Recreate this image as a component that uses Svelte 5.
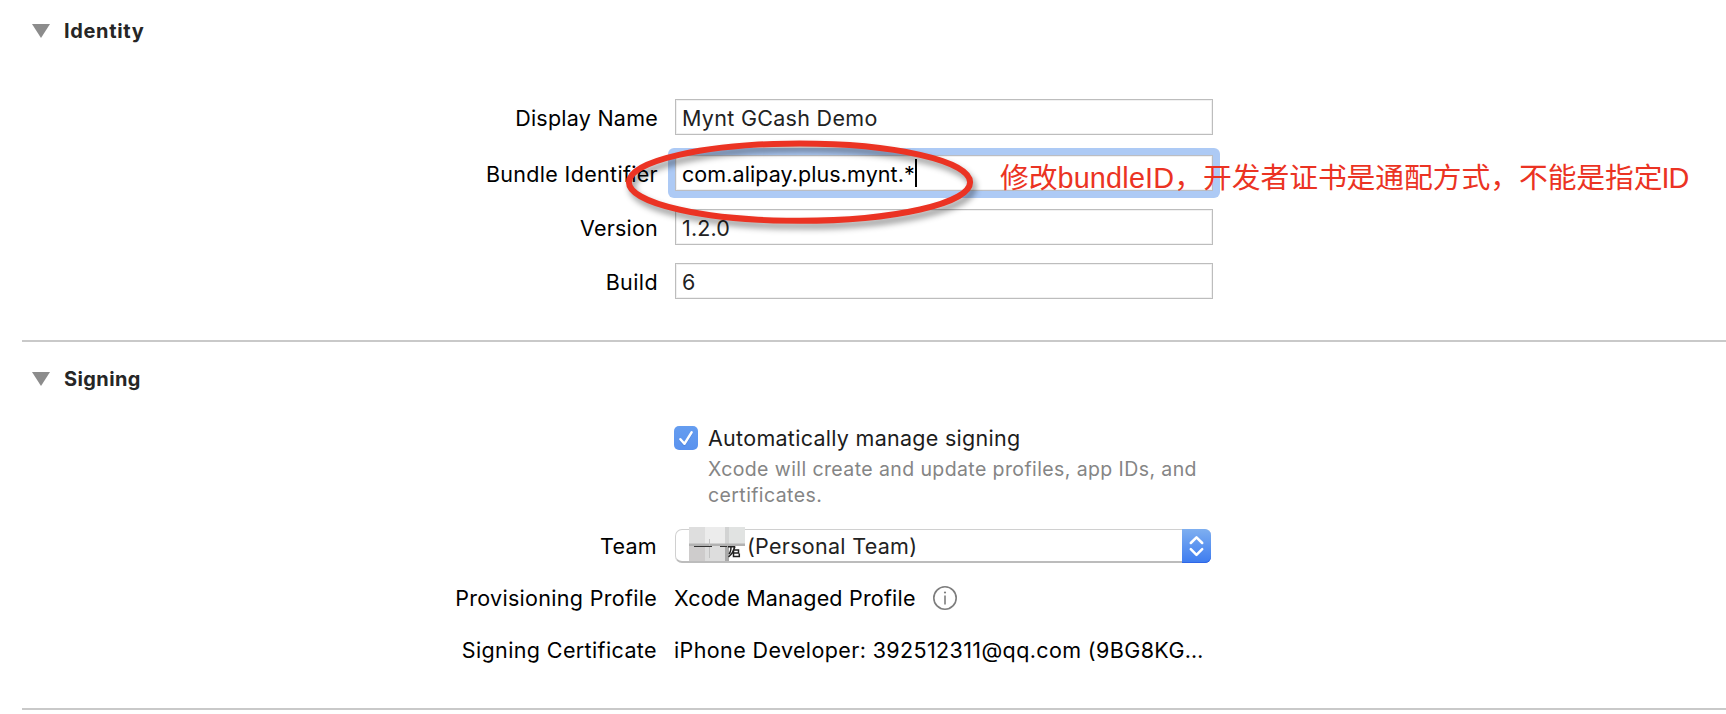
<script>
  const fields = [
    { label: 'Display Name', value: 'Mynt GCash Demo', ls: 0.24, vs: 0.3 },
    { label: 'Bundle Identifier', value: 'com.alipay.plus.mynt.*', ls: 0.32, vs: 0.08, focused: true },
    { label: 'Version', value: '1.2.0', ls: 0.2, vs: 0.15 },
    { label: 'Build', value: '6', ls: 0.4, vs: 0 }
  ];
</script>

<main lang="zh-CN">
  <section class="identity">
    <header>
      <svg width="18" height="14" viewBox="0 0 18 14"><path d="M0 0H18L9 14Z" fill="#8c8c8c" /></svg>
      <h2 class="wide">Identity</h2>
    </header>
    <div class="fields">
      {#each fields as f}
        <div class="row" class:bundle={f.focused}>
          <span class="label" style="letter-spacing:{f.ls}px">{f.label}</span>
          <div class="field" class:focused={f.focused}>
            <span style="letter-spacing:{f.vs}px">{f.value}</span>{#if f.focused}<i class="caret"></i>{/if}
          </div>
        </div>
      {/each}
    </div>
  </section>

  <section class="signing">
    <header>
      <svg width="18" height="14" viewBox="0 0 18 14"><path d="M0 0H18L9 14Z" fill="#8c8c8c" /></svg>
      <h2>Signing</h2>
    </header>
    <div class="auto">
      <svg class="check" width="24" height="24" viewBox="0 0 24 24">
        <defs><linearGradient id="cb" x2="0" y2="1"><stop stop-color="#659df0" /><stop offset="1" stop-color="#5a92ee" /></linearGradient></defs>
        <rect width="24" height="24" rx="5" fill="url(#cb)" />
        <path d="M6.4 13.2L10.4 17.8L17.6 6.4" fill="none" stroke="#3f74cc" stroke-opacity=".45" stroke-width="2.6" stroke-linecap="round" stroke-linejoin="round" transform="translate(0 1)" />
        <path d="M6.4 13.2L10.4 17.8L17.6 6.4" fill="none" stroke="#fff" stroke-width="2.5" stroke-linecap="round" stroke-linejoin="round" />
      </svg>
      <div>
        <div class="title">Automatically manage signing</div>
        <p>Xcode will create and update profiles, app IDs, and<br />certificates.</p>
      </div>
    </div>
    <div class="row team">
      <span class="label">Team</span>
      <div class="select">
        <svg class="mosaic" width="57" height="34" viewBox="0 0 57 34">
          <rect width="56" height="17" fill="#e6e6e6" />
          <rect width="16" height="17" fill="#dedede" />
          <rect x="16" width="20" height="17" fill="#ececec" />
          <rect x="36" width="4" height="17" fill="#d2d3d3" />
          <rect x="40" width="16" height="17" fill="#e1e3e2" />
          <rect y="17" width="16" height="17" fill="#cecccc" />
          <rect x="16" y="17" width="20" height="17" fill="#dddddd" />
          <rect x="36" y="17" width="4" height="17" fill="#a9a9a9" />
          <rect y="16.5" width="56" height="2.5" fill="#b2b2b2" />
          <path d="M20.5 12V31" stroke="#c2c2c2" />
          <path d="M5 19.5H23M31 19.5H38" stroke="#333" stroke-width="1.2" />
          <path d="M39 19.7H45.5Q44.5 26 39.5 30M42 19.5Q42 25 40 27M46 20L44.5 23H49.5V26H44.5M44.5 23V29.5H50.3V26.5" fill="none" stroke="#222" stroke-width="1.5" />
        </svg>
        <span>(Personal Team)</span>
        <div class="stepper">
          <svg width="29" height="34" viewBox="0 0 29 34"><path d="M8.8 14L14.5 8.3L20.2 14M8.8 20.2L14.5 25.9L20.2 20.2" fill="none" stroke="#fff" stroke-width="2.5" stroke-linecap="round" stroke-linejoin="round" /></svg>
        </div>
      </div>
    </div>
    <div class="row prov">
      <span class="label">Provisioning Profile</span>
      <span class="plain profile">Xcode Managed Profile</span>
      <svg class="info" width="24" height="24" viewBox="0 0 24 24"><circle cx="12" cy="12" r="11.2" fill="none" stroke="#7d7d7d" stroke-width="1.6" /><path d="M12 9.5V18.5" stroke="#7d7d7d" stroke-width="1.6" /><circle cx="12" cy="6.5" r="1.1" fill="#7d7d7d" /></svg>
    </div>
    <div class="row cert">
      <span class="label">Signing Certificate</span>
      <span class="plain certificate">iPhone Developer: 392512311@qq.com (9BG8KG…</span>
    </div>
  </section>

  <svg class="ring" width="370" height="110" viewBox="0 0 370 110">
    <ellipse cx="184.5" cy="52.2" rx="170.6" ry="38.6" fill="none" stroke="#eb3323" stroke-width="6" />
  </svg>
  <div class="note">修改<span class="bid">bundleID</span>，开发者证书是通配方式，不能是指定<span class="id">ID</span></div>
</main>

<style>
  :global(body) { margin: 0; background: #fff; overflow: hidden; }
  main { position: relative; isolation: isolate; width: 1726px; height: 714px; overflow: hidden; background: #fff; font: 430 21.5px/36px Inter, sans-serif; color: #000; white-space: nowrap; }
  section { box-sizing: border-box; margin-left: 22px; border-bottom: 2px solid #c9c9c9; }
  .identity { height: 342px; padding-top: 13px; }
  .signing { height: 368px; padding-top: 19px; }
  header { display: flex; align-items: center; height: 36px; padding-left: 10px; gap: 14px; }
  h2 { margin: 0; font-size: 20px; font-weight: 700; line-height: 36px; color: #262626; letter-spacing: .4px; }
  h2.wide { letter-spacing: .65px; }
  .fields { margin-top: 50px; display: flex; flex-direction: column; gap: 18px; }
  .row { display: flex; align-items: center; height: 36px; }
  .label { width: 636px; margin-right: 17px; text-align: right; position: relative; top: 1px; }
  .field { box-sizing: border-box; display: flex; align-items: center; width: 538px; height: 36px; padding-left: 6px; border: 1px solid #bdbdbd; box-shadow: inset 0 0 0 1px #f1f1f1; color: #222; }
  .field span { position: relative; top: 1px; }
  .bundle { margin: 2px 0 0; }
  .focused { position: relative; color: #000; background: #fff; border-color: #bbbdc2; }
  .focused::before { content: ''; position: absolute; inset: -8px; border-radius: 6px; background: #adcaf5; z-index: -1; }
  .caret { width: 2px; height: 28px; background: #000; }
  .auto { display: flex; margin: 29px 0 0 652px; gap: 10px; height: 102px; }
  .check { flex: none; }
  .title { height: 29px; line-height: 25px; letter-spacing: .28px; color: #1c1c1c; }
  p { margin: 0; font-size: 19.5px; line-height: 26px; letter-spacing: .4px; color: #858585; padding-top: 1px; }
  .signing .label { width: 635px; margin-right: 18px; top: 0; }
  .team .label { letter-spacing: .3px; }
  .select { box-sizing: border-box; display: flex; align-items: center; width: 536px; height: 34px; border: 1px solid #d0d0d0; border-bottom: 2px solid #bcbcbc; border-radius: 7px; color: #222; letter-spacing: .28px; }
  .mosaic { margin: -3px 0 0 13px; flex: none; }
  .select span { margin-left: 1px; }
  .stepper { width: 29px; height: 34px; margin: 0 -1px -1px auto; border-radius: 0 6px 6px 0; background: linear-gradient(#7eaff0, #3d7cf0); box-shadow: inset 0 -1px #2f66e6; }
  .stepper svg { display: block; }
  .prov { margin-top: 16px; }
  .prov .label { letter-spacing: .3px; }
  .plain { margin-left: -1px; }
  .profile { letter-spacing: .2px; }
  .info { margin-left: 17px; }
  .cert { margin-top: 16px; }
  .cert .label, .certificate { letter-spacing: .38px; }
  .ring { position: absolute; left: 615px; top: 129.5px; filter: drop-shadow(3px 5px 3px rgba(0, 0, 0, .42)); }
  .note { position: absolute; left: 1000px; top: 160px; font: 28.8px/36px "Liberation Sans", "Noto Sans CJK SC", sans-serif; color: #eb3323; letter-spacing: -.08px; }
  .bid { letter-spacing: .2px; }
  .id { letter-spacing: -1px; margin-left: -1px; }
</style>
